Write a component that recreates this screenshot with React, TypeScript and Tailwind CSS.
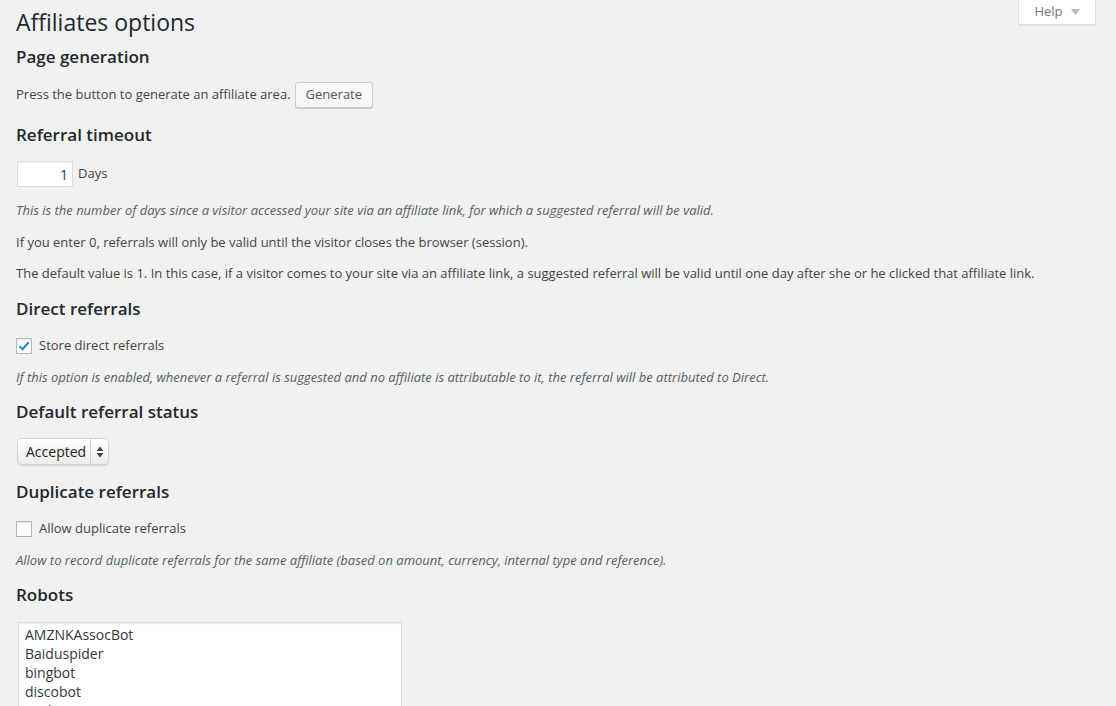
import React from "react";

function Heading({ children, className = "" }: { children: React.ReactNode; className?: string }) {
    return (
        <h3 className={`text-[17px] leading-[24px] font-semibold text-[#23282d] ${className}`}>
            {children}
        </h3>
    );
}

function Description({ children, className = "" }: { children: React.ReactNode; className?: string }) {
    return <p className={`text-[13px] leading-[20px] italic text-[#555d66] ${className}`}>{children}</p>;
}

function Checkbox({ checked, label, className = "" }: { checked: boolean; label: string; className?: string }) {
    return (
        <label className={`flex items-center h-[20px] ${className}`}>
            <span className="w-[16px] h-[16px] border border-[#b4b9be] bg-white shadow-[inset_0_1px_2px_rgba(0,0,0,0.1)] flex items-center justify-center">
                {checked && (
                    <svg width="14" height="14" viewBox="0 0 14 14">
                        <path d="M2.5 7.2 L5.6 10.2 L11.6 3.2" fill="none" stroke="#1e8cbe" strokeWidth="2.2" />
                    </svg>
                )}
            </span>
            <span className="ml-[7px] text-[13px] text-[#444]">{label}</span>
        </label>
    );
}

const robots = ["AMZNKAssocBot", "Baiduspider", "bingbot", "discobot", "Exabot", "Googlebot"];

export default function App() {
    return (
        <div
            className="min-h-screen bg-[#f1f1f1] pl-4 pr-5 text-[#444]"
            style={{ fontFamily: '"Open Sans", "Noto Sans", sans-serif' }}
        >
            <div className="flex items-start justify-between">
                <h1 className="mt-[8px] text-[23px] leading-[29px] font-normal text-[#23282d]">Affiliates options</h1>
                <button className="w-[78px] h-[25px] bg-white border border-t-0 border-[#ddd] shadow-[0_1px_1px_rgba(0,0,0,0.04)] flex items-center justify-center text-[13px] text-[#72777c]">
                    Help
                    <svg className="ml-[8px]" width="9" height="6" viewBox="0 0 9 6">
                        <path d="M0 0 H9 L4.5 6 Z" fill="#b4b9be" />
                    </svg>
                </button>
            </div>

            <Heading className="mt-[8px]">Page generation</Heading>
            <div className="mt-[13px] flex items-center text-[13px]">
                <span>Press the button to generate an affiliate area.</span>
                <button className="ml-[4px] h-[26px] px-[10px] rounded-[3px] bg-[#f7f7f7] border border-[#ccc] shadow-[0_1px_0_#ccc] text-[13px] text-[#555]">
                    Generate
                </button>
            </div>

            <Heading className="mt-[15px]">Referral timeout</Heading>
            <div className="mt-[14px] flex items-center text-[13px]">
                <div className="ml-px w-[56px] h-[26px] bg-white border border-[#ddd] shadow-[inset_0_1px_2px_rgba(0,0,0,0.07)] flex items-center justify-end pr-[4px] text-[14px] text-[#32373c]">
                    1
                </div>
                <span className="ml-[5px]">Days</span>
            </div>
            <Description className="mt-[13px]">
                This is the number of days since a visitor accessed your site via an affiliate link, for which a suggested referral will be valid.
            </Description>
            <p className="mt-[12px] text-[13px] leading-[20px]">
                If you enter 0, referrals will only be valid until the visitor closes the browser (session).
            </p>
            <p className="mt-[11px] text-[13px] leading-[20px]">
                The default value is 1. In this case, if a visitor comes to your site via an affiliate link, a suggested referral will be valid until one day after she or he clicked that affiliate link.
            </p>

            <Heading className="mt-[14px]">Direct referrals</Heading>
            <Checkbox className="mt-[15px]" checked label="Store direct referrals" />
            <Description className="mt-[11px]">
                If this option is enabled, whenever a referral is suggested and no affiliate is attributable to it, the referral will be attributed to Direct.
            </Description>

            <Heading className="mt-[13px]">Default referral status</Heading>
            <div className="mt-[14px] ml-px w-[92px] h-[27px] rounded-[5px] border border-[#d4d4d4] bg-gradient-to-b from-white to-[#ececec] shadow-[0_1px_1px_rgba(0,0,0,0.12)] flex items-center text-[14px] text-[#222]">
                <span className="pl-[8px] pr-[4px]">Accepted</span>
                <span className="h-full w-px bg-[#d0d0d0]" />
                <svg className="ml-[5px]" width="8" height="12" viewBox="0 0 8 12">
                    <path d="M4 0.5 L7.5 5 H0.5 Z M4 11.5 L7.5 7 H0.5 Z" fill="#444" />
                </svg>
            </div>

            <Heading className="mt-[15px]">Duplicate referrals</Heading>
            <Checkbox className="mt-[15px]" checked={false} label="Allow duplicate referrals" />
            <Description className="mt-[11px]">
                Allow to record duplicate referrals for the same affiliate (based on amount, currency, internal type and reference).
            </Description>

            <Heading className="mt-[13px]">Robots</Heading>
            <div className="mt-[15px] ml-[2px] w-[384px] h-[110px] overflow-hidden bg-white border border-[#ddd] shadow-[inset_0_1px_2px_rgba(0,0,0,0.07)] pt-[2px] px-[6px] text-[14px] leading-[19px] text-[#32373c]">
                {robots.map((r) => (
                    <div key={r}>{r}</div>
                ))}
            </div>
        </div>
    );
}
